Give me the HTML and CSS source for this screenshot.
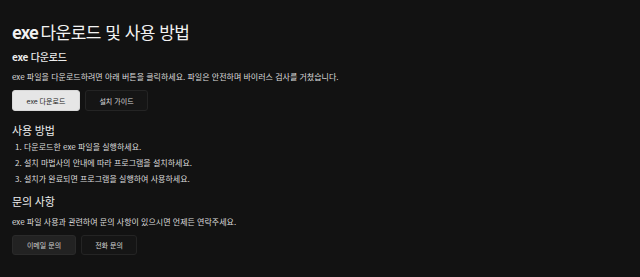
FILE: index.html
```html
<!DOCTYPE html>
<html lang="ko">
<head>
<meta charset="utf-8">
<link rel="stylesheet" href="styles.css">
</head>
<body>
<main class="page">
  <h1 class="title"><span class="exe">exe</span> 다운로드 및 사용 방법</h1>

  <section>
    <h2 class="sub sub-first"><span class="exe-sm">exe</span> 다운로드</h2>
    <p class="text">exe 파일을 다운로드하려면 아래 버튼을 클릭하세요. 파일은 안전하며 바이러스 검사를 거쳤습니다.</p>
    <div class="btns">
      <button class="btn btn-light btn-a">exe 다운로드</button>
      <button class="btn btn-dark btn-b">설치 가이드</button>
    </div>
  </section>

  <section>
    <h2 class="sub sub-usage">사용 방법</h2>
    <ol class="steps">
      <li>다운로드한 exe 파일을 실행하세요.</li>
      <li>설치 마법사의 안내에 따라 프로그램을 설치하세요.</li>
      <li>설치가 완료되면 프로그램을 실행하여 사용하세요.</li>
    </ol>
  </section>

  <section>
    <h2 class="sub sub-contact">문의 사항</h2>
    <p class="text text-contact">exe 파일 사용과 관련하여 문의 사항이 있으시면 언제든 연락주세요.</p>
    <div class="btns">
      <button class="btn btn-grey btn-c">이메일 문의</button>
      <button class="btn btn-dark btn-d">전화 문의</button>
    </div>
  </section>
</main>
</body>
</html>
```

FILE: styles.css
```css
html, body {
  margin: 0;
  padding: 0;
  background: #121212;
}
body {
  font-family: "Noto Sans CJK KR", "Noto Sans", sans-serif;
  color: #e6e6e6;
  width: 640px;
  height: 277px;
  overflow: hidden;
}
.page {
  padding: 20px 12px 0 12px;
}
.title {
  margin: 0;
  font-size: 17px;
  line-height: 24px;
  font-weight: 400;
  color: #f2f2f2;
  letter-spacing: -0.5px;
}
.exe {
  font-weight: 700;
  letter-spacing: -0.8px;
  margin-right: -2px;
}
.sub {
  margin: 0;
  font-size: 10px;
  line-height: 14px;
  font-weight: 500;
  color: #ececec;
  letter-spacing: -0.2px;
}
.sub-first { margin-top: 6px; }
.exe-sm { font-weight: 700; }
.sub-usage { margin-top: 12px; font-size: 11px; font-weight: 400; }
.sub-contact { margin-top: 7px; font-size: 11px; font-weight: 400; }
.text {
  margin: 7px 0 0 0;
  font-size: 8px;
  line-height: 12px;
  color: #dcdcdc;
}
.text-contact { margin-top: 8px; }
.btns {
  display: flex;
  gap: 5px;
  margin-top: 7px;
}
.btn {
  font-family: inherit;
  font-size: 7px;
  height: 21px;
  border-radius: 3px;
  padding: 0;
  display: flex;
  align-items: center;
  justify-content: center;
  box-sizing: border-box;
  cursor: pointer;
}
.btn-a { width: 68px; }
.btn-b { width: 63px; }
.btn-c { width: 64px; height: 20px; }
.btn-d { width: 56px; height: 20px; }
.btn-light {
  background: #e6e6e6;
  color: #222;
  border: 1px solid #d8d8d8;
}
.btn-dark {
  background: #151515;
  color: #d8d8d8;
  border: 1px solid #242424;
}
.btn-grey {
  background: #222222;
  color: #cfcfcf;
  border: 1px solid #2a2a2a;
}
.steps {
  margin: 2px 0 0 0;
  padding: 0 0 0 12px;
  font-size: 8px;
  line-height: 16px;
  color: #dcdcdc;
}
.steps li { padding-left: 0; }
```
